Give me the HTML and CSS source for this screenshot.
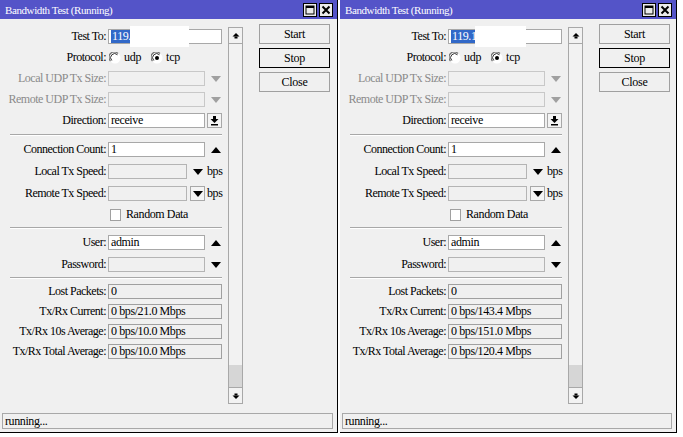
FILE: index.html
```html
<!DOCTYPE html>
<html>
<head>
<meta charset="utf-8">
<link rel="stylesheet" href="styles.css">
</head>
<body>
<div class="win">
  <div class="titlebar">
    <span class="title">Bandwidth Test (Running)</span>
    <span class="tbtn"><svg width="12" height="12" viewBox="0 0 12 12"><rect x="2" y="2" width="8" height="8" fill="none" stroke="#000" stroke-width="1"/><rect x="2" y="2" width="8" height="2" fill="#000"/></svg></span>
    <span class="tbtn last"><svg width="12" height="12" viewBox="0 0 12 12"><path d="M2.5 2.5 L9.5 9.5 M9.5 2.5 L2.5 9.5" stroke="#000" stroke-width="2"/></svg></span>
  </div>
  <div class="main">
    <div class="form">
      <div class="sec sec-a">
        <div class="row"><span class="lbl">Test To:</span><span class="fld w114"><span class="sel">119.1</span></span><span class="redact"></span></div>
        <div class="row"><span class="lbl">Protocol:</span>
          <span class="radio"><svg width="12" height="12" viewBox="0 0 12 12"><circle cx="6" cy="6" r="5.5" fill="#fff"/><path d="M1.5 9 A5 5 0 0 1 9 1.5" fill="none" stroke="#707070" stroke-width="1.2"/><path d="M2.8 8.5 A4 4 0 0 1 8.5 2.8" fill="none" stroke="#303030" stroke-width="1"/></svg></span><span class="rtxt">udp</span>
          <span class="radio"><svg width="12" height="12" viewBox="0 0 12 12"><circle cx="6" cy="6" r="5.5" fill="#fff"/><path d="M1.5 9 A5 5 0 0 1 9 1.5" fill="none" stroke="#707070" stroke-width="1.2"/><path d="M2.8 8.5 A4 4 0 0 1 8.5 2.8" fill="none" stroke="#303030" stroke-width="1"/><circle cx="6" cy="6" r="2" fill="#000"/></svg></span><span class="rtxt">tcp</span>
        </div>
        <div class="row"><span class="lbl dim">Local UDP Tx Size:</span><span class="fld w97 dis"></span><span class="tri"><svg width="10" height="6" viewBox="0 0 10 6"><path d="M0 0 H10 L5 6 Z" fill="#a0a0a0"/></svg></span></div>
        <div class="row"><span class="lbl dim">Remote UDP Tx Size:</span><span class="fld w97 dis"></span><span class="tri"><svg width="10" height="6" viewBox="0 0 10 6"><path d="M0 0 H10 L5 6 Z" fill="#a0a0a0"/></svg></span></div>
        <div class="row"><span class="lbl">Direction:</span><span class="fld w97">receive</span><span class="ddb"><svg width="9" height="10" viewBox="0 0 9 10"><rect x="3" y="0" width="3" height="3" fill="#000"/><path d="M0.5 3 H8.5 L4.5 7 Z" fill="#000"/><rect x="1" y="8" width="7" height="1.5" fill="#000"/></svg></span></div>
      </div>
      <div class="sep s1"></div>
      <div class="sec sec-b">
        <div class="row"><span class="lbl">Connection Count:</span><span class="fld w97">1</span><span class="tri"><svg width="10" height="6" viewBox="0 0 10 6"><path d="M0 6 H10 L5 0 Z" fill="#000"/></svg></span></div>
        <div class="row"><span class="lbl">Local Tx Speed:</span><span class="fld w79 grey"></span><span class="tri t2"><svg width="10" height="6" viewBox="0 0 10 6"><path d="M0 0 H10 L5 6 Z" fill="#000"/></svg></span><span class="unit">bps</span></div>
        <div class="row"><span class="lbl">Remote Tx Speed:</span><span class="fld w79 grey"></span><span class="ddb small"><svg width="10" height="6" viewBox="0 0 10 6"><path d="M0 0 H10 L5 6 Z" fill="#000"/></svg></span><span class="unit u2">bps</span></div>
        <div class="row crow"><span class="lbl"></span><span class="chk"></span><span class="ctxt">Random Data</span></div>
      </div>
      <div class="sep s2"></div>
      <div class="sec sec-c">
        <div class="row"><span class="lbl">User:</span><span class="fld w97">admin</span><span class="tri"><svg width="10" height="6" viewBox="0 0 10 6"><path d="M0 6 H10 L5 0 Z" fill="#000"/></svg></span></div>
        <div class="row"><span class="lbl">Password:</span><span class="fld w97 grey"></span><span class="tri"><svg width="10" height="6" viewBox="0 0 10 6"><path d="M0 0 H10 L5 6 Z" fill="#000"/></svg></span></div>
      </div>
      <div class="sep s3"></div>
      <div class="sec sec-d">
        <div class="row"><span class="lbl">Lost Packets:</span><span class="fld w114 ro">0</span></div>
        <div class="row"><span class="lbl">Tx/Rx Current:</span><span class="fld w114 ro">0 bps/21.0 Mbps</span></div>
        <div class="row"><span class="lbl">Tx/Rx 10s Average:</span><span class="fld w114 ro">0 bps/10.0 Mbps</span></div>
        <div class="row"><span class="lbl">Tx/Rx Total Average:</span><span class="fld w114 ro">0 bps/10.0 Mbps</span></div>
      </div>
    </div>
    <div class="scroll">
      <div class="sbtn"><svg width="8" height="8" viewBox="0 0 8 8"><path d="M0.5 4.5 L4 1 L7.5 4.5 Z" fill="#000"/><rect x="2.5" y="4.5" width="3" height="2" fill="#000"/></svg></div>
      <div class="track"><div class="thumb"></div></div>
      <div class="sbtn bot"><svg width="8" height="8" viewBox="0 0 8 8"><path d="M0.5 3.5 L4 7 L7.5 3.5 Z" fill="#000"/><rect x="2.5" y="1.5" width="3" height="2" fill="#000"/></svg></div>
    </div>
    <div class="buttons">
      <div class="btn">Start</div>
      <div class="btn focus">Stop</div>
      <div class="btn">Close</div>
    </div>
  </div>
  <div class="status">running...</div>
</div>

<div class="win win2">
  <div class="titlebar">
    <span class="title">Bandwidth Test (Running)</span>
    <span class="tbtn"><svg width="12" height="12" viewBox="0 0 12 12"><rect x="2" y="2" width="8" height="8" fill="none" stroke="#000" stroke-width="1"/><rect x="2" y="2" width="8" height="2" fill="#000"/></svg></span>
    <span class="tbtn last"><svg width="12" height="12" viewBox="0 0 12 12"><path d="M2.5 2.5 L9.5 9.5 M9.5 2.5 L2.5 9.5" stroke="#000" stroke-width="2"/></svg></span>
  </div>
  <div class="main">
    <div class="form">
      <div class="sec sec-a">
        <div class="row"><span class="lbl">Test To:</span><span class="fld w114"><span class="sel">119.1</span></span><span class="redact r2"></span></div>
        <div class="row"><span class="lbl">Protocol:</span>
          <span class="radio"><svg width="12" height="12" viewBox="0 0 12 12"><circle cx="6" cy="6" r="5.5" fill="#fff"/><path d="M1.5 9 A5 5 0 0 1 9 1.5" fill="none" stroke="#707070" stroke-width="1.2"/><path d="M2.8 8.5 A4 4 0 0 1 8.5 2.8" fill="none" stroke="#303030" stroke-width="1"/></svg></span><span class="rtxt">udp</span>
          <span class="radio"><svg width="12" height="12" viewBox="0 0 12 12"><circle cx="6" cy="6" r="5.5" fill="#fff"/><path d="M1.5 9 A5 5 0 0 1 9 1.5" fill="none" stroke="#707070" stroke-width="1.2"/><path d="M2.8 8.5 A4 4 0 0 1 8.5 2.8" fill="none" stroke="#303030" stroke-width="1"/><circle cx="6" cy="6" r="2" fill="#000"/></svg></span><span class="rtxt">tcp</span>
        </div>
        <div class="row"><span class="lbl dim">Local UDP Tx Size:</span><span class="fld w97 dis"></span><span class="tri"><svg width="10" height="6" viewBox="0 0 10 6"><path d="M0 0 H10 L5 6 Z" fill="#a0a0a0"/></svg></span></div>
        <div class="row"><span class="lbl dim">Remote UDP Tx Size:</span><span class="fld w97 dis"></span><span class="tri"><svg width="10" height="6" viewBox="0 0 10 6"><path d="M0 0 H10 L5 6 Z" fill="#a0a0a0"/></svg></span></div>
        <div class="row"><span class="lbl">Direction:</span><span class="fld w97">receive</span><span class="ddb"><svg width="9" height="10" viewBox="0 0 9 10"><rect x="3" y="0" width="3" height="3" fill="#000"/><path d="M0.5 3 H8.5 L4.5 7 Z" fill="#000"/><rect x="1" y="8" width="7" height="1.5" fill="#000"/></svg></span></div>
      </div>
      <div class="sep s1"></div>
      <div class="sec sec-b">
        <div class="row"><span class="lbl">Connection Count:</span><span class="fld w97">1</span><span class="tri"><svg width="10" height="6" viewBox="0 0 10 6"><path d="M0 6 H10 L5 0 Z" fill="#000"/></svg></span></div>
        <div class="row"><span class="lbl">Local Tx Speed:</span><span class="fld w79 grey"></span><span class="tri t2"><svg width="10" height="6" viewBox="0 0 10 6"><path d="M0 0 H10 L5 6 Z" fill="#000"/></svg></span><span class="unit">bps</span></div>
        <div class="row"><span class="lbl">Remote Tx Speed:</span><span class="fld w79 grey"></span><span class="ddb small"><svg width="10" height="6" viewBox="0 0 10 6"><path d="M0 0 H10 L5 6 Z" fill="#000"/></svg></span><span class="unit u2">bps</span></div>
        <div class="row crow"><span class="lbl"></span><span class="chk"></span><span class="ctxt">Random Data</span></div>
      </div>
      <div class="sep s2"></div>
      <div class="sec sec-c">
        <div class="row"><span class="lbl">User:</span><span class="fld w97">admin</span><span class="tri"><svg width="10" height="6" viewBox="0 0 10 6"><path d="M0 6 H10 L5 0 Z" fill="#000"/></svg></span></div>
        <div class="row"><span class="lbl">Password:</span><span class="fld w97 grey"></span><span class="tri"><svg width="10" height="6" viewBox="0 0 10 6"><path d="M0 0 H10 L5 6 Z" fill="#000"/></svg></span></div>
      </div>
      <div class="sep s3"></div>
      <div class="sec sec-d">
        <div class="row"><span class="lbl">Lost Packets:</span><span class="fld w114 ro">0</span></div>
        <div class="row"><span class="lbl">Tx/Rx Current:</span><span class="fld w114 ro">0 bps/143.4 Mbps</span></div>
        <div class="row"><span class="lbl">Tx/Rx 10s Average:</span><span class="fld w114 ro">0 bps/151.0 Mbps</span></div>
        <div class="row"><span class="lbl">Tx/Rx Total Average:</span><span class="fld w114 ro">0 bps/120.4 Mbps</span></div>
      </div>
    </div>
    <div class="scroll">
      <div class="sbtn"><svg width="8" height="8" viewBox="0 0 8 8"><path d="M0.5 4.5 L4 1 L7.5 4.5 Z" fill="#000"/><rect x="2.5" y="4.5" width="3" height="2" fill="#000"/></svg></div>
      <div class="track"><div class="thumb"></div></div>
      <div class="sbtn bot"><svg width="8" height="8" viewBox="0 0 8 8"><path d="M0.5 3.5 L4 7 L7.5 3.5 Z" fill="#000"/><rect x="2.5" y="1.5" width="3" height="2" fill="#000"/></svg></div>
    </div>
    <div class="buttons">
      <div class="btn">Start</div>
      <div class="btn focus">Stop</div>
      <div class="btn">Close</div>
    </div>
  </div>
  <div class="status">running...</div>
</div>
</body>
</html>
```
FILE: styles.css
```css
html, body { margin: 0; padding: 0; }
body {
  width: 683px;
  height: 437px;
  background: #ffffff;
  display: flex;
  align-items: flex-start;
  gap: 2px;
  font-family: "Liberation Serif", "DejaVu Serif", serif;
  font-size: 12px;
  color: #000;
  overflow: hidden;
}
.win {
  width: 338px;
  height: 433px;
  box-sizing: border-box;
  background: #f0f0f0;
  border-right: 1px solid #000;
  border-bottom: 1px solid #000;
  display: flex;
  flex-direction: column;
  position: relative;
}
.win2 { width: 337px; }
.titlebar {
  height: 19px;
  flex: none;
  background: #5454c8;
  color: #fff;
  display: flex;
  align-items: center;
  padding-left: 5px;
}
.title { flex: 1; font-size: 11px; letter-spacing: -0.4px; }
.tbtn {
  width: 14px;
  height: 14px;
  box-sizing: border-box;
  border: 1px solid #000;
  background: #ececec;
  margin-right: 2px;
  display: flex;
  align-items: center;
  justify-content: center;
}
.tbtn.last { margin-right: 4px; }
.main { height: 394px; flex: none; display: flex; }
.form { width: 224px; padding-top: 10px; }
.sec { display: flex; flex-direction: column; }
.sec-a { gap: 6px; }
.sec-b { gap: 7px; }
.sec-c { gap: 7px; }
.sec-d { gap: 5px; }
.row { height: 15px; display: flex; align-items: center; position: relative; }
.crow { height: 13px; }
.lbl {
  width: 108px;
  flex: none;
  box-sizing: border-box;
  padding-right: 2px;
  text-align: right;
  white-space: nowrap;
  letter-spacing: -0.5px;
}
.dim { color: #8a8a8a; }
.fld {
  height: 15px;
  box-sizing: border-box;
  border: 1px solid #a8a8a8;
  background: #fff;
  padding-left: 2px;
  line-height: 13px;
  white-space: nowrap;
  overflow: hidden;
  flex: none;
  letter-spacing: -0.4px;
}
.w114 { width: 114px; }
.w97 { width: 97px; }
.w79 { width: 79px; }
.dis { background: #f0f0f0; border-color: #c8c8c8; }
.grey { background: #f0f0f0; border-color: #b4b4b4; }
.ro { background: #f0f0f0; border-color: #a0a0a0; }
.sel { background: #3168c8; color: #fff; padding: 0 1px; }
.redact {
  position: absolute;
  left: 130px;
  top: -3px;
  width: 59px;
  height: 21px;
  background: #fff;
}
.redact.r2 { left: 135px; width: 51px; }
.radio { width: 12px; height: 12px; display: flex; margin-left: 1px; }
.radio + .rtxt { margin-left: 3px; margin-right: 9px; letter-spacing: -0.3px; }
.tri { width: 10px; height: 6px; display: flex; margin-left: 6px; }
.tri.t2 { margin-left: 6px; }
.ddb {
  width: 15px;
  height: 15px;
  box-sizing: border-box;
  border: 1px solid #a8a8a8;
  background: #f4f4f4;
  margin-left: 2px;
  display: flex;
  align-items: center;
  justify-content: center;
}
.ddb.small { width: 15px; margin-left: 3px; }
.unit { margin-left: 4px; letter-spacing: -0.4px; }
.unit.u2 { margin-left: 2px; }
.chk {
  width: 11px;
  height: 12px;
  box-sizing: border-box;
  border: 1px solid #a0a0a0;
  background: #fff;
  margin-left: 2px;
}
.ctxt { margin-left: 5px; letter-spacing: -0.4px; }
.sep {
  margin-left: 10px;
  width: 212px;
  height: 0;
  border-top: 1px solid #a8a8a8;
  border-bottom: 1px solid #ffffff;
}
.s1 { margin-top: 6px; margin-bottom: 6px; }
.s2 { margin-top: 6px; margin-bottom: 6px; }
.s3 { margin-top: 5px; margin-bottom: 5px; }
.scroll {
  margin-left: 4px;
  margin-top: 8px;
  width: 15px;
  height: 377px;
  box-sizing: border-box;
  border: 1px solid #a8a8a8;
  display: flex;
  flex-direction: column;
  background: #f2f2f2;
}
.sbtn {
  height: 16px;
  flex: none;
  box-sizing: border-box;
  border-bottom: 1px solid #a8a8a8;
  display: flex;
  align-items: center;
  justify-content: center;
}
.sbtn.bot { border-bottom: none; border-top: 1px solid #a8a8a8; height: 16px; }
.track { flex: 1; display: flex; flex-direction: column; justify-content: flex-end; }
.thumb { height: 22px; background: #d6d6d6; }
.buttons { margin-left: 16px; margin-top: 5px; width: 71px; display: flex; flex-direction: column; gap: 4px; }
.btn {
  height: 20px;
  box-sizing: border-box;
  border: 1px solid #a0a0a0;
  background: #f0f0f0;
  display: flex;
  align-items: center;
  justify-content: center;
  letter-spacing: -0.3px;
}
.btn.focus { border-color: #000; }
.status {
  height: 16px;
  flex: none;
  margin: 0 4px 0 2px;
  box-sizing: border-box;
  border: 1px solid #a8a8a8;
  padding-left: 2px;
  line-height: 14px;
  letter-spacing: -0.4px;
}
```
